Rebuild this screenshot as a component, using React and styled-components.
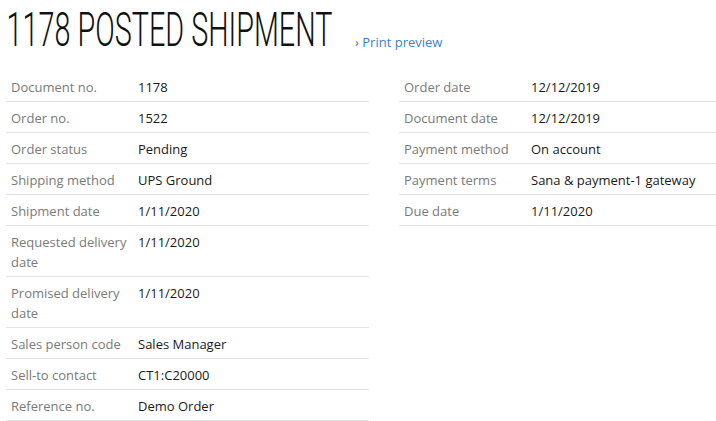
import React from "react";
import styled, { createGlobalStyle } from "styled-components";

const Global = createGlobalStyle`
  html, body { margin: 0; padding: 0; background: #fff; }
  body { font-family: "Open Sans", "Liberation Sans", sans-serif; font-size: 13px; color: #222; }
`;

const Page = styled.div`
  padding: 0 0 0 6px;
  width: 710px;
  overflow: hidden;
`;

const Header = styled.div`
  display: flex;
  align-items: flex-start;
  height: 71px;
  box-sizing: border-box;
  padding-top: 5px;
`;

const TitleBox = styled.div`
  width: 349px;
  flex: none;
  height: 50px;
  overflow: hidden;
`;

const Title = styled.h1`
  margin: 0;
  padding-left: 1px;
  font-family: "Roboto", "Liberation Sans", sans-serif;
  font-weight: 300;
  font-size: 47.8px;
  line-height: 50px;
  white-space: nowrap;
  transform: scaleX(0.602);
  transform-origin: left center;
  color: #111;
`;

const PrintLink = styled.a`
  color: #3c7fd4;
  text-decoration: none;
  font-size: 13px;
  line-height: 18px;
  margin-top: 27.5px;
`;

const Columns = styled.div`
  display: grid;
  grid-template-columns: 363px 1fr;
  column-gap: 30px;
  align-items: start;
`;

const Table = styled.div`
  display: flex;
  flex-direction: column;
`;

const Row = styled.div`
  display: grid;
  grid-template-columns: 132px 1fr;
  border-bottom: 1px solid #e3e3e3;
  padding: 6px 0 4px;
  line-height: 20px;
`;

const Label = styled.div`
  color: #7a7a7a;
  padding-left: 5px;
  padding-right: 6px;
`;

const Value = styled.div`
  color: #1a1a1a;
`;

const left = [
  ["Document no.", "1178"],
  ["Order no.", "1522"],
  ["Order status", "Pending"],
  ["Shipping method", "UPS Ground"],
  ["Shipment date", "1/11/2020"],
  ["Requested delivery date", "1/11/2020"],
  ["Promised delivery date", "1/11/2020"],
  ["Sales person code", "Sales Manager"],
  ["Sell-to contact", "CT1:C20000"],
  ["Reference no.", "Demo Order"],
];

const right = [
  ["Order date", "12/12/2019"],
  ["Document date", "12/12/2019"],
  ["Payment method", "On account"],
  ["Payment terms", "Sana & payment-1 gateway"],
  ["Due date", "1/11/2020"],
];

const Section = ({ rows }) => (
  <Table>
    {rows.map(([l, v]) => (
      <Row key={l}>
        <Label>{l}</Label>
        <Value>{v}</Value>
      </Row>
    ))}
  </Table>
);

export default function App() {
  return (
    <>
      <Global />
      <Page>
        <Header>
          <TitleBox>
            <Title>1178 POSTED SHIPMENT</Title>
          </TitleBox>
          <PrintLink href="#">› Print preview</PrintLink>
        </Header>
        <Columns>
          <Section rows={left} />
          <Section rows={right} />
        </Columns>
      </Page>
    </>
  );
}
